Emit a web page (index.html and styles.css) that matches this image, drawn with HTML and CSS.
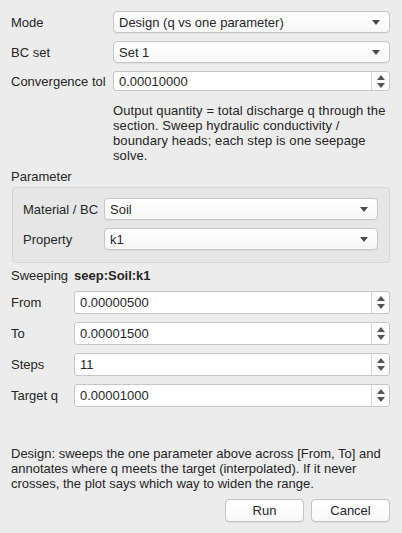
FILE: index.html
```html
<!DOCTYPE html>
<html>
<head>
<meta charset="utf-8">
<link rel="stylesheet" href="styles.css">
</head>
<body>
<div class="dlg">
  <div class="form top">
    <label class="lbl">Mode</label>
    <div class="combo"><span>Design (q vs one parameter)</span><i class="arrow"></i></div>
    <label class="lbl">BC set</label>
    <div class="combo"><span>Set 1</span><i class="arrow"></i></div>
    <label class="lbl">Convergence tol</label>
    <div class="spin"><span>0.00010000</span><div class="btns"><i class="up"></i><i class="down"></i></div></div>
  </div>
  <p class="note">Output quantity = total discharge q through the section. Sweep hydraulic conductivity / boundary heads; each step is one seepage solve.</p>

  <div class="gtitle">Parameter</div>
  <div class="group">
    <label class="lbl">Material / BC</label>
    <div class="combo"><span>Soil</span><i class="arrow"></i></div>
    <label class="lbl">Property</label>
    <div class="combo"><span>k1</span><i class="arrow"></i></div>
  </div>

  <div class="form sweep">
    <label class="lbl">Sweeping</label>
    <div class="bold">seep:Soil:k1</div>
    <label class="lbl">From</label>
    <div class="spin tall"><span>0.00000500</span><div class="btns"><i class="up"></i><i class="down"></i></div></div>
    <label class="lbl">To</label>
    <div class="spin tall"><span>0.00001500</span><div class="btns"><i class="up"></i><i class="down"></i></div></div>
    <label class="lbl">Steps</label>
    <div class="spin tall"><span>11</span><div class="btns"><i class="up"></i><i class="down"></i></div></div>
    <label class="lbl">Target q</label>
    <div class="spin tall"><span>0.00001000</span><div class="btns"><i class="up"></i><i class="down"></i></div></div>
  </div>

  <p class="note bottom">Design: sweeps the one parameter above across [From, To] and annotates where q meets the target (interpolated). If it never crosses, the plot says which way to widen the range.</p>
  <div class="buttons">
    <button class="btn">Run</button>
    <button class="btn">Cancel</button>
  </div>
</div>
</body>
</html>
```

FILE: styles.css
```css
html, body {
  margin: 0;
  padding: 0;
  background: #ececec;
}
body {
  font-family: "Liberation Sans", Arial, sans-serif;
  font-size: 13px;
  color: #262626;
  width: 402px;
  height: 533px;
  overflow: hidden;
}
.dlg {
  padding: 11px 12px 0 11px;
  display: flex;
  flex-direction: column;
}
.form {
  display: grid;
  grid-template-columns: 102px 1fr;
  align-items: center;
}
.top {
  row-gap: 8px;
}
.lbl {
  white-space: nowrap;
}
.combo {
  height: 20px;
  border: 1px solid #c6c6c6;
  border-radius: 4px;
  background: linear-gradient(#ffffff, #f7f7f7);
  box-shadow: 0 1px 0 rgba(0,0,0,0.04);
  display: flex;
  align-items: center;
  padding-left: 5px;
  padding-right: 9px;
  position: relative;
}
.combo span {
  flex: 1;
}
.arrow {
  width: 0;
  height: 0;
  border-left: 4.5px solid transparent;
  border-right: 4.5px solid transparent;
  border-top: 5px solid #4a4a4a;
}
.spin {
  height: 18px;
  border: 1px solid #c6c6c6;
  border-radius: 3px;
  background: #fff;
  display: flex;
  align-items: center;
  padding-left: 5px;
}
.spin.tall {
  height: 21px;
}
.spin span {
  flex: 1;
}
.btns {
  width: 17px;
  align-self: stretch;
  border-left: 1px solid #d4d4d4;
  display: flex;
  flex-direction: column;
  align-items: center;
  justify-content: center;
  gap: 3px;
}
.up {
  width: 0;
  height: 0;
  border-left: 4px solid transparent;
  border-right: 4px solid transparent;
  border-bottom: 5px solid #555;
}
.down {
  width: 0;
  height: 0;
  border-left: 4px solid transparent;
  border-right: 4px solid transparent;
  border-top: 5px solid #555;
}
.note {
  margin: 12px 0 0 102px;
  line-height: 15px;
  letter-spacing: 0.1px;
}
.gtitle {
  margin-top: 6px;
  line-height: 15px;
}
.group {
  margin-top: 3px;
  margin-left: 1px;
  border: 1px solid #d6d6d6;
  border-radius: 3px;
  background: #e6e6e6;
  padding: 10px 11px 12px 10px;
  display: grid;
  grid-template-columns: 81px 1fr;
  row-gap: 8px;
  align-items: center;
}
.sweep {
  margin-top: 6px;
  grid-template-columns: 63px 1fr;
  row-gap: 8px;
}
.sweep .bold {
  font-weight: bold;
  line-height: 14px;
}
.sweep .lbl:first-child {
  line-height: 14px;
}
.note.bottom {
  margin: 39px 0 0 0;
  letter-spacing: 0;
}
.buttons {
  display: flex;
  justify-content: flex-end;
  gap: 7px;
  margin-top: 8px;
}
.btn {
  font-family: inherit;
  font-size: 13px;
  color: #262626;
  width: 79px;
  height: 23px;
  border: 1px solid #c3c3c3;
  border-radius: 4px;
  background: linear-gradient(#ffffff, #f8f8f8);
  box-shadow: 0 1px 0 rgba(0,0,0,0.05);
  padding: 0;
}
```
